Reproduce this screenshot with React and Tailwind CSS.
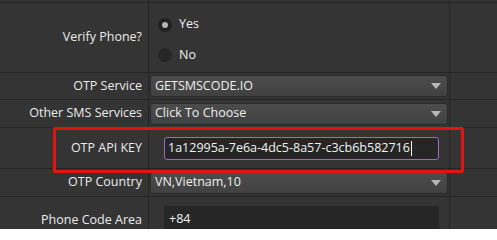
const font = { fontFamily: '"Open Sans", "Segoe UI", sans-serif' };

const Caret = () => (
  <svg width="10" height="6" viewBox="0 0 10 6" className="shrink-0">
    <path d="M0 0 L10 0 L5 6 Z" fill="#b8b8b8" />
  </svg>
);

const SelectBox = ({ value }) => (
  <div className="ml-[1px] mr-[1px] flex h-[22px] items-center justify-between rounded-[3px] border border-[#2a2a2a] bg-gradient-to-b from-[#4c4c4c] to-[#414141] pl-[4px] pr-[6px] text-[12.5px] text-[#efefef]">
    <span>{value}</span>
    <Caret />
  </div>
);

const Row = ({ label, h, children }) => (
  <div className={`flex border-b border-[#242424] ${h}`}>
    <div className="flex w-[149px] shrink-0 items-center justify-end border-r border-[#242424] pr-[6px] text-[12.5px] text-[#ebebeb]">
      {label}
    </div>
    <div className="flex w-[301px] shrink-0 flex-col justify-center border-r border-[#242424]">
      {children}
    </div>
    <div className="flex-1" />
  </div>
);

export default function App() {
  const apiKey = "1a12995a-7e6a-4dc5-8a57-c3cb6b582716";
  return (
    <div className="relative h-[229px] w-[497px] overflow-hidden bg-[#343434]" style={font}>
      <div className="flex h-[3px] border-b border-[#242424]">
        <div className="w-[149px] border-r border-[#242424]" />
        <div className="w-[301px] border-r border-[#242424]" />
      </div>

      <Row label="Verify Phone?" h="h-[70px]">
        <div className="mt-[5px] flex w-full flex-col gap-[12px] pl-[9px] text-[12.5px] text-[#efefef]">
          <div className="flex items-center gap-[7px]">
            <span className="flex h-[14px] w-[14px] items-center justify-center rounded-full bg-[#222222]">
              <span className="h-[6px] w-[6px] rounded-full bg-[#b4b4b4]" />
            </span>
            <span>Yes</span>
          </div>
          <div className="flex items-center gap-[7px]">
            <span className="h-[14px] w-[14px] rounded-full bg-[#262626]" />
            <span>No</span>
          </div>
        </div>
      </Row>

      <Row label="OTP Service" h="h-[27px]">
        <SelectBox value="GETSMSCODE.IO" />
      </Row>

      <Row label="Other SMS Services" h="h-[28px]">
        <SelectBox value="Click To Choose" />
      </Row>

      <Row label="OTP API KEY" h="h-[41px]">
        <div className="pl-[15px] pr-[10px]">
          <div className="flex h-[23px] items-center rounded-[3px] border border-[#9a6bbf] bg-[#262626] pl-[3px] text-[12.5px] text-[#f2f2f2]">
            <span>{apiKey}</span>
            <span className="ml-[1px] h-[15px] w-[1px] bg-[#f2f2f2]" />
          </div>
        </div>
      </Row>

      <Row label="OTP Country" h="h-[28px]">
        <SelectBox value="VN,Vietnam,10" />
      </Row>

      <div className="flex h-[40px]">
        <div className="flex h-[46px] w-[149px] shrink-0 items-center justify-end border-r border-[#242424] pr-[6px] text-[12.5px] text-[#ebebeb]">
          Phone Code Area
        </div>
        <div className="w-[301px] shrink-0 border-r border-[#242424] pl-[15px] pr-[10px] pt-[9px]">
          <div className="flex h-[30px] items-start rounded-t-[2px] bg-[#262626] pl-[5px] pt-[4px] text-[12.5px] text-[#f2f2f2]">
            +84
          </div>
        </div>
      </div>

      <div className="pointer-events-none absolute left-[53px] top-[127px] h-[46px] w-[411px] rounded-[2px] border-[3px] border-[#e01414]" />
    </div>
  );
}
